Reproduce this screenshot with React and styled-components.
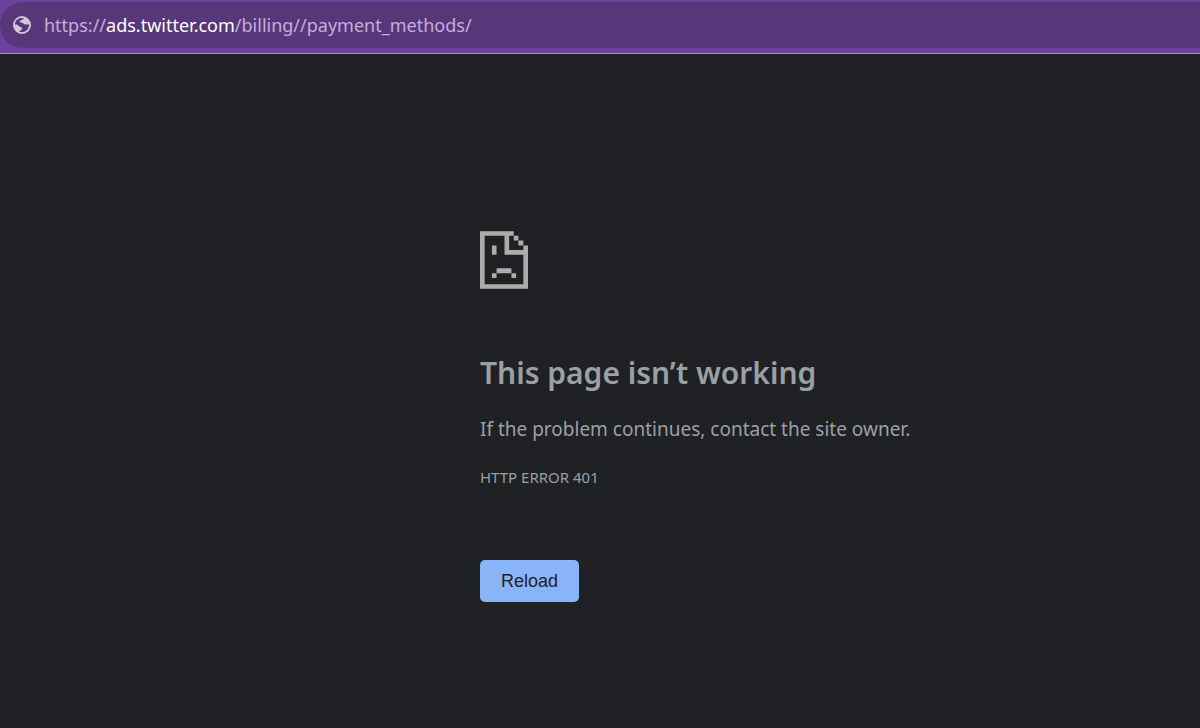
import React from 'react'
import styled, { createGlobalStyle } from 'styled-components'

const GlobalStyle = createGlobalStyle`
* {
box-sizing: border-box;
}
body {
margin: 0;
background-color: #202124;
font-family: "Noto Sans", "Open Sans", sans-serif;
}
`;
const Container = styled.div`
min-height: 100vh;
display: flex;
flex-direction: column;
`;
const Toolbar = styled.header`
padding: 2px 0 5px;
background-color: #6e40a0;
border-bottom: 1px solid #a88fc6;
`;
const AddressBar = styled.div`
height: 46px;
padding-left: 12px;
display: flex;
align-items: center;
gap: 12px;
background-color: #57377a;
border-radius: 23px 0 0 23px;
`;
const Globe = styled.svg`
width: 20px;
height: 20px;
flex: none;
`;
const Url = styled.a`
color: #c5addd;
font-size: 18px;
line-height: 24px;
text-decoration: none;
white-space: nowrap;
`;
const Host = styled.span`
color: #ffffff;
`;
const Main = styled.main`
width: 60%;
margin-left: auto;
padding: 177px 24px 48px 0;
color: #9aa0a6;
`;
const SadPage = styled.svg`
display: block;
width: 48px;
height: 58px;
`;
const Title = styled.h1`
margin: 60px 0 16px;
font-size: 30px;
font-weight: 600;
line-height: 48px;
`;
const Text = styled.p`
margin: 0;
font-size: 19px;
line-height: 32px;
`;
const ErrorCode = styled.p`
margin: 20px 0 0;
font-size: 15px;
line-height: 24px;
`;
const Button = styled.button`
margin-top: 71px;
padding: 0 21px;
height: 42px;
border: none;
border-radius: 5px;
background-color: #8ab4f8;
color: #202124;
font-family: "Liberation Sans", Arial, sans-serif;
font-size: 18px;
cursor: pointer;
`;

const App = () => {
    return (
        <>
            <GlobalStyle />
            <Container>
                <Toolbar>
                    <AddressBar>
                        <Globe viewBox="0 0 20 20" aria-hidden="true">
                            <circle cx="10" cy="10" r="9" fill="#cfc8d4" />
                            <path
                                d="M3 9.4C3.1 6 5.5 3.2 9 2.9L12 3.2C11.4 4.8 8.6 4.6 7.6 6.6C7.8 8 10.8 7.2 11.6 8.8C12.2 10 14 9.4 17.1 9.4C17.1 13.6 14 17 10 17.1H7.2C7.8 15 10 15.2 10.2 13.4C10 11.8 7.8 12.2 7 11.2C6 9.8 5 9.4 3 9.4Z"
                                fill="#57377a"
                            />
                        </Globe>
                        <Url href="https://ads.twitter.com/billing//payment_methods/">
                            https://<Host>ads.twitter.com</Host>/billing//payment_methods/
                        </Url>
                    </AddressBar>
                </Toolbar>
                <Main>
                    <SadPage viewBox="0 0 145 174" aria-hidden="true" fill="#acacaa">
                        <path d="M0 0H102V14H88V57H131V43H145V174H0ZM14 14V160H131V71H74V14Z" fillRule="evenodd" />
                        <path d="M102 14H116V28H102ZM116 28H131V43H116Z" />
                        <path d="M36 43H50V71H36ZM50 112H95V127H50ZM36 127H50V141H36ZM95 127H109V141H95Z" />
                    </SadPage>
                    <Title>This page isn’t working</Title>
                    <Text>If the problem continues, contact the site owner.</Text>
                    <ErrorCode>HTTP ERROR 401</ErrorCode>
                    <Button type="button" onClick={() => window.location.reload()}>Reload</Button>
                </Main>
            </Container>
        </>
    )
}

export default App
